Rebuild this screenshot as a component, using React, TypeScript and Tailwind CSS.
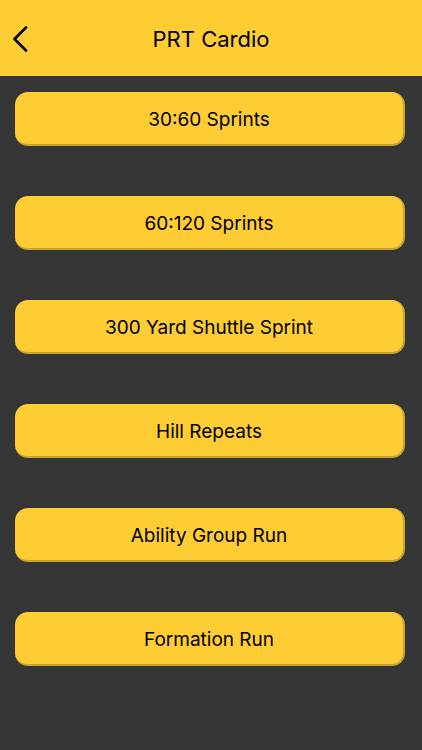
const items = [
  "30:60 Sprints",
  "60:120 Sprints",
  "300 Yard Shuttle Sprint",
  "Hill Repeats",
  "Ability Group Run",
  "Formation Run",
];

export default function App() {
  return (
    <div
      className="w-[422px] h-[750px] bg-[#353535] flex flex-col"
      style={{ fontFamily: "Inter, 'Liberation Sans', sans-serif" }}
    >
      <div className="h-[76px] bg-[#fecc33] flex items-center relative">
        <button className="absolute left-[10px] top-[26px] text-black">
          <svg width="20" height="26" viewBox="0 0 20 26" fill="none">
            <polyline
              points="16,1.5 4.5,13 16,24.5"
              stroke="black"
              strokeWidth="2.6"
              strokeLinecap="round"
              strokeLinejoin="round"
            />
          </svg>
        </button>
        <h1 className="w-full text-center text-[22px] text-black pt-[2px]">PRT Cardio</h1>
      </div>
      <div className="flex flex-col gap-[50px] pt-[16px] px-[15px]">
        {items.map((t) => (
          <button
            key={t}
            className="h-[54px] w-[390px] rounded-[13px] bg-[#fecc33] border-b-2 border-r-2 border-[#caa12c] text-[19px] text-black pt-[4px]"
          >
            {t}
          </button>
        ))}
      </div>
    </div>
  );
}
